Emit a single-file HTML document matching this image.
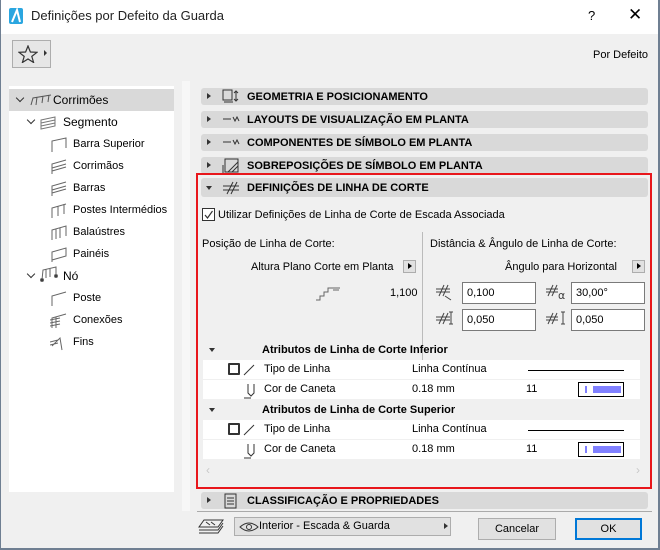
<!DOCTYPE html>
<html><head><meta charset="utf-8"><style>
*{box-sizing:border-box;margin:0;padding:0}
body{width:660px;height:550px;background:#f0f0f0;font-family:"Liberation Sans",sans-serif;font-size:11px;color:#000;position:relative;overflow:hidden}
.a{position:absolute;white-space:nowrap}
.hdr{position:absolute;left:201px;width:447px;height:17px;background:#d9d9d9;border-radius:3px;font-weight:bold;font-size:11px;line-height:17px}
.hdr .t{position:absolute;left:46px;top:1px}
.hdr .tri{position:absolute;left:6px;top:5px;width:0;height:0;border-left:4px solid #333;border-top:3.5px solid transparent;border-bottom:3.5px solid transparent}
.tri-d{position:absolute;width:0;height:0;border-top:4px solid #333;border-left:3.5px solid transparent;border-right:3.5px solid transparent}
.inp{position:absolute;background:#fff;border:1px solid #7a7a7a;height:22px;line-height:20px;padding-left:4px;font-size:11px}
.row{position:absolute;left:203px;width:437px;height:19px;background:#fff;line-height:19px}
.btn{position:absolute;border:1px solid #adadad;background:#e1e1e1;text-align:center;line-height:20px;height:22px}
.sm{position:absolute;width:13px;height:13px;border:1px solid #adadad;background:#e1e1e1}
.sm:after{content:"";position:absolute;left:4px;top:2px;border-left:4px solid #000;border-top:3.5px solid transparent;border-bottom:3.5px solid transparent}
.chev{position:absolute;width:6px;height:6px;border-right:1.5px solid #333;border-bottom:1.5px solid #333;transform:rotate(45deg)}
</style></head><body>
<div class="a" style="left:0;top:0;width:660px;height:34px;background:#fff"></div>
<div class="a" style="left:0;top:0;width:1px;height:550px;background:#6f7f92"></div>
<div class="a" style="left:658px;top:0;width:2px;height:550px;background:#6f7f92"></div>
<div class="a" style="left:0;top:548px;width:660px;height:2px;background:#6f7f92"></div>
<svg class="a" style="left:9px;top:8px" width="14" height="16"><rect x="0" y="0" width="14" height="16" rx="2" fill="#2aa6e0"/><path d="M3 14 L8 2 L11 14" stroke="#fff" stroke-width="2" fill="none"/></svg>
<div class="a" style="left:31px;top:8px;font-size:13px;color:#222">Definições por Defeito da Guarda</div>
<div class="a" style="left:588px;top:8px;font-size:13px">?</div>
<div class="a" style="left:628px;top:5px;font-size:17px;font-weight:300">✕</div>
<div class="a" style="left:12px;top:40px;width:39px;height:28px;border:1px solid #adadad;background:#e6e6e6"></div>
<svg class="a" style="left:18px;top:45px" width="20" height="18"><path d="M10 1 L12.4 7 L19 7.3 L13.8 11.4 L15.6 17.5 L10 14 L4.4 17.5 L6.2 11.4 L1 7.3 L7.6 7 Z" fill="none" stroke="#333" stroke-width="1.2"/></svg>
<div class="a" style="left:44px;top:50px;border-left:3px solid #333;border-top:3px solid transparent;border-bottom:3px solid transparent"></div>
<div class="a" style="left:593px;top:49px">Por Defeito</div>
<div class="a" style="left:9px;top:86px;width:165px;height:406px;background:#fff"></div>
<div class="a" style="left:182px;top:81px;width:8px;height:430px;background:#f7f7f7"></div>
<div class="a" style="left:9px;top:89px;width:165px;height:22px;background:#d9d9d9"></div>
<div class="chev" style="left:17px;top:95px"></div>
<div class="a" style="left:53px;top:93px;font-size:12px">Corrimões</div>
<svg class="a" style="left:30px;top:94px" width="22" height="12"><path d="M1 11 L3 4 L21 1 M6 11 L7 3 M12 9 L13 2 M18 8 L19 1" stroke="#555" fill="none"/></svg>
<div class="chev" style="left:28px;top:117px"></div>
<svg class="a" style="left:40px;top:116px" width="16" height="14"><path d="M1 4 L15 1 L15 10 L1 13 Z M1 7 L15 4 M1 10 L15 7" stroke="#777" fill="none"/></svg>
<div class="a" style="left:63px;top:115px;font-size:12px">Segmento</div>
<div class="a" style="left:73px;top:137px;font-size:11px;line-height:14px">Barra Superior</div>
<div class="a" style="left:73px;top:159px;line-height:14px">Corrimãos</div>
<div class="a" style="left:73px;top:181px;line-height:14px">Barras</div>
<div class="a" style="left:73px;top:203px;line-height:14px">Postes Intermédios</div>
<div class="a" style="left:73px;top:225px;line-height:14px">Balaústres</div>
<div class="a" style="left:73px;top:247px;line-height:14px">Painéis</div>
<div class="chev" style="left:28px;top:271px"></div>
<div class="a" style="left:63px;top:269px;font-size:12px">Nó</div>
<div class="a" style="left:73px;top:291px;line-height:14px">Poste</div>
<div class="a" style="left:73px;top:313px;line-height:14px">Conexões</div>
<div class="a" style="left:73px;top:335px;line-height:14px">Fins</div>
<svg class="a" style="left:50px;top:136px" width="18" height="222" stroke="#666" fill="none">
<path d="M2 16 L2 5 L16 2 L16 12"/>
<path d="M2 38 L2 28 L16 24 M2 32 L16 28 M2 35 L16 31"/>
<path d="M2 60 L2 50 L16 46 M2 54 L16 50 M2 57 L16 53"/>
<path d="M2 82 L2 72 L16 68 M8 80 L8 70 M14 78 L14 68"/>
<path d="M2 104 L2 94 L16 90 L16 100 M6 103 L6 93 M10 102 L10 92"/>
<path d="M2 126 L2 116 L16 112 L16 120 L2 124"/>
<path d="M2 170 L2 160 L16 156"/>
<path d="M2 192 L2 182 L16 178 M6 192 L6 181 M0 184 L10 182 M0 187 L10 185 M0 190 L10 188"/>
<path d="M2 210 L10 202 L12 214 M0 206 L8 204 M0 209 L8 207"/>
</svg>
<svg class="a" style="left:40px;top:266px" width="18" height="16" stroke="#666" fill="none"><path d="M2 14 L3 4 L16 1 L16 10 M6 3 L6 12 M10 2 L10 11"/><circle cx="2" cy="14" r="1.5" fill="#333"/><circle cx="16" cy="10" r="1.5" fill="#333"/></svg>

<div class="hdr" style="top:88px"><div class="tri"></div><span class="t">GEOMETRIA E POSICIONAMENTO</span></div>
<div class="hdr" style="top:111px"><div class="tri"></div><span class="t">LAYOUTS DE VISUALIZAÇÃO EM PLANTA</span></div>
<div class="hdr" style="top:134px"><div class="tri"></div><span class="t">COMPONENTES DE SÍMBOLO EM PLANTA</span></div>
<div class="hdr" style="top:157px"><div class="tri"></div><span class="t">SOBREPOSIÇÕES DE SÍMBOLO EM PLANTA</span></div>
<svg class="a" style="left:222px;top:88px" width="20" height="90" stroke="#333" fill="none">
<rect x="1" y="2" width="9" height="10"/><path d="M2 14 L11 14 M14 3 L14 13 M12 5 L14 3 L16 5 M12 11 L14 13 L16 11"/>
<path d="M1 31 L9 31 M11 29 L13 33 L15 29 L17 33"/>
<path d="M1 54 L9 54 M11 52 L13 56 L15 52 L17 56"/>
<rect x="3" y="71" width="13" height="13"/><path d="M6 84 L16 74 M10 84 L16 78 M1 77 L1 86 L10 86"/>
</svg>
<div class="a" style="left:196px;top:173px;width:456px;height:316px;border:2px solid #e8161b"></div>
<div class="hdr" style="top:178px;left:201px;height:19px;line-height:19px"><div class="a" style="left:5px;top:8px;border-top:4px solid #333;border-left:3.5px solid transparent;border-right:3.5px solid transparent"></div><span class="t">DEFINIÇÕES DE LINHA DE CORTE</span></div>
<svg class="a" style="left:222px;top:181px" width="18" height="14" stroke="#333" fill="none"><path d="M1 5 L17 5 M1 9 L17 9 M5 13 L11 1 M9 13 L15 1"/></svg>
<div class="a" style="left:202px;top:208px;width:13px;height:13px;border:1px solid #333;background:#fff"></div>
<svg class="a" style="left:203px;top:209px" width="11" height="11"><path d="M2 6 L4.5 9 L9.5 2" stroke="#333" fill="none" stroke-width="1.2"/></svg>
<div class="a" style="left:218px;top:209px">Utilizar Definições de Linha de Corte de Escada Associada</div>
<div class="a" style="left:422px;top:232px;width:1px;height:132px;background:#bbb"></div>
<div class="a" style="left:202px;top:238px">Posição de Linha de Corte:</div>
<div class="a" style="left:430px;top:238px">Distância &amp; Ângulo de Linha de Corte:</div>
<div class="a" style="left:251px;top:261px">Altura Plano Corte em Planta</div>
<div class="sm" style="left:403px;top:260px"></div>
<div class="a" style="left:505px;top:261px">Ângulo para Horizontal</div>
<div class="sm" style="left:632px;top:260px"></div>
<svg class="a" style="left:315px;top:284px" width="26" height="18" stroke="#666" fill="none"><path d="M1 16 L5 16 L5 12 L9 12 L9 8 L13 8 L13 4 L25 4 M18 6 L24 6"/></svg>
<div class="a" style="left:390px;top:287px">1,100</div>
<div class="inp" style="left:462px;top:282px;width:74px">0,100</div>
<div class="inp" style="left:571px;top:282px;width:74px">30,00°</div>
<div class="inp" style="left:462px;top:309px;width:74px">0,050</div>
<div class="inp" style="left:571px;top:309px;width:74px">0,050</div>
<svg class="a" style="left:435px;top:282px" width="20" height="50" stroke="#444" fill="none"><path d="M1 7 L15 7 M1 10 L15 10 M4 14 L9 3 M8 14 L13 3 M10 14 L16 18"/><path d="M1 35 L15 35 M1 38 L15 38 M4 42 L9 31 M8 42 L13 31 M14 30 L18 30 M16 30 L16 42 M14 42 L18 42"/></svg>
<svg class="a" style="left:545px;top:282px" width="24" height="50" stroke="#444" fill="none"><path d="M1 7 L13 7 M1 10 L13 10 M3 14 L8 3 M7 14 L12 3"/><text x="13" y="17" font-size="11" fill="#444" stroke="none" font-family="DejaVu Sans">α</text><path d="M1 35 L13 35 M1 38 L13 38 M3 42 L8 31 M7 42 L12 31 M16 30 L20 30 M18 30 L18 42 M16 42 L20 42"/></svg>
<div class="tri-d" style="left:209px;top:348px"></div>
<div class="a" style="left:262px;top:344px;font-weight:bold">Atributos de Linha de Corte Inferior</div>
<div class="row" style="top:360px"></div>
<div class="row" style="top:380px"></div>
<div class="tri-d" style="left:209px;top:408px"></div>
<div class="a" style="left:262px;top:404px;font-weight:bold">Atributos de Linha de Corte Superior</div>
<div class="row" style="top:420px"></div>
<div class="row" style="top:440px"></div>
<div class="a" style="left:228px;top:363px;width:12px;height:12px;border:2px solid #333;border-radius:1px"></div>
<div class="a" style="left:228px;top:423px;width:12px;height:12px;border:2px solid #333;border-radius:1px"></div>
<svg class="a" style="left:243px;top:362px" width="14" height="100" stroke="#333" fill="none"><path d="M1 13 L11 3"/><path d="M5 22 L5 31 L8 34 L11 31 L11 22 M1 36 L8 36"/><path d="M1 73 L11 63"/><path d="M5 82 L5 91 L8 94 L11 91 L11 82 M1 96 L8 96"/></svg>
<div class="a" style="left:264px;top:363px">Tipo de Linha</div>
<div class="a" style="left:412px;top:363px">Linha Contínua</div>
<div class="a" style="left:528px;top:370px;width:96px;height:1px;background:#000"></div>
<div class="a" style="left:264px;top:383px">Cor de Caneta</div>
<div class="a" style="left:412px;top:383px">0.18 mm</div>
<div class="a" style="left:526px;top:383px">11</div>
<div class="a" style="left:578px;top:382px;width:46px;height:15px;border:1px solid #000;background:#fff"><div class="a" style="left:6px;top:3px;width:2px;height:7px;background:#8080ff"></div><div class="a" style="left:14px;top:3px;width:28px;height:7px;background:#8080ff"></div></div>
<div class="a" style="left:264px;top:423px">Tipo de Linha</div>
<div class="a" style="left:412px;top:423px">Linha Contínua</div>
<div class="a" style="left:528px;top:430px;width:96px;height:1px;background:#000"></div>
<div class="a" style="left:264px;top:443px">Cor de Caneta</div>
<div class="a" style="left:412px;top:443px">0.18 mm</div>
<div class="a" style="left:526px;top:443px">11</div>
<div class="a" style="left:578px;top:442px;width:46px;height:15px;border:1px solid #000;background:#fff"><div class="a" style="left:6px;top:3px;width:2px;height:7px;background:#8080ff"></div><div class="a" style="left:14px;top:3px;width:28px;height:7px;background:#8080ff"></div></div>
<div class="a" style="left:206px;top:463px;color:#c8c8c8;font-size:12px">‹</div>
<div class="a" style="left:636px;top:463px;color:#c8c8c8;font-size:12px">›</div>
<div class="hdr" style="top:492px"><div class="tri"></div><span class="t">CLASSIFICAÇÃO E PROPRIEDADES</span></div>
<svg class="a" style="left:224px;top:493px" width="14" height="16" stroke="#333" fill="none"><rect x="1" y="1" width="11" height="14"/><path d="M3 5 L10 5 M3 8 L10 8 M3 11 L10 11"/></svg>
<div class="a" style="left:197px;top:511px;width:455px;height:1px;background:#aaa"></div>
<svg class="a" style="left:198px;top:518px" width="26" height="18" stroke="#333" fill="none"><path d="M6 2 L25 2 L20 9 L1 9 Z M1 12 L20 12 L25 5 M1 15 L20 15 L25 8 M8 4 L12 7 M13 4 L17 7"/></svg>
<div class="a" style="left:234px;top:517px;width:217px;height:19px;border:1px solid #adadad;background:#e1e1e1"></div>
<svg class="a" style="left:239px;top:522px" width="20" height="10" stroke="#333" fill="none"><path d="M1 5 Q10 -3 19 5 Q10 13 1 5 Z"/><circle cx="10" cy="5" r="2.5"/></svg>
<div class="a" style="left:259px;top:520px">Interior - Escada &amp; Guarda</div>
<div class="a" style="left:444px;top:523px;border-left:4px solid #333;border-top:3.5px solid transparent;border-bottom:3.5px solid transparent"></div>
<div class="btn" style="left:478px;top:518px;width:78px">Cancelar</div>
<div class="btn" style="left:575px;top:518px;width:67px;border:2px solid #0078d7;line-height:18px">OK</div>
</body></html>
